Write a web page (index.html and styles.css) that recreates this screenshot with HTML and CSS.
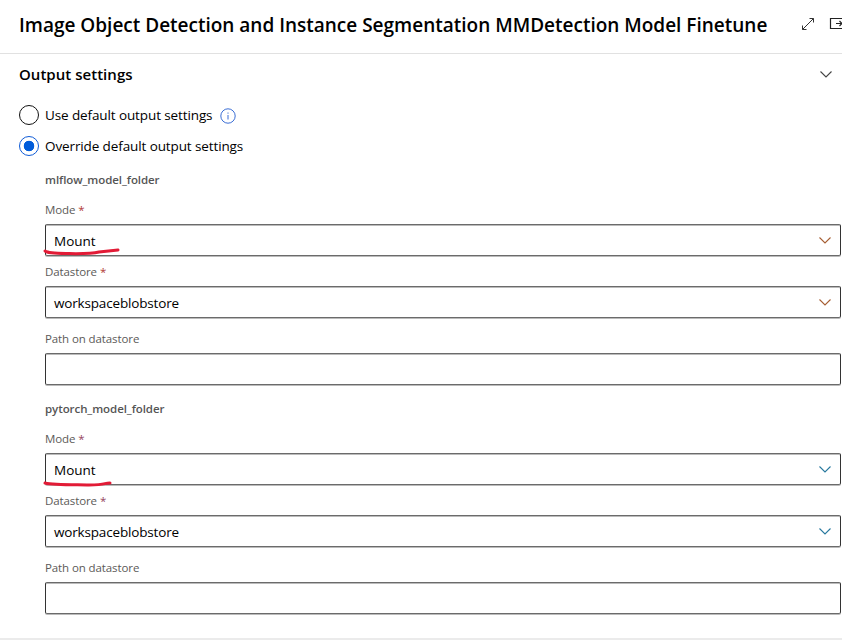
FILE: index.html
```html
<!DOCTYPE html>
<html lang="en">
<head>
<meta charset="utf-8">
<title>Output settings</title>
<link rel="stylesheet" href="styles.css">
</head>
<body>
<header class="header">
  <h1><span>Image Object Detection and Instance Segmentation MMDetection Model Finetune</span></h1>
  <svg class="expand" width="14" height="14" viewBox="0 0 14 14"><path d="M1.500 12.500 12.500 1.500M8.500 1.500h4v4M1.500 8.500v4h4"/></svg>
  <svg class="dock" width="16" height="12" viewBox="0 0 16 12"><path d="M.5 .5h15v10H.5zM6 5.500h6M9.500 3l2.500 2.500L9.500 8"/></svg>
</header>
<main>
  <div class="section-head">
    <h2><span>Output settings</span></h2>
    <svg class="chevron" width="12" height="7" viewBox="0 0 12 7"><path d="M.5 .5 6 6l5.500-5.500"/></svg>
  </div>
  <div class="option first">
    <i class="radio"></i><span>Use default output settings</span>
    <svg class="info" width="16" height="16" viewBox="0 0 16 16"><circle cx="8" cy="8" r="7.200"/><path d="M8 7v4.500M8 4.500v1.200"/></svg>
  </div>
  <div class="option">
    <i class="radio checked"></i><span>Override default output settings</span>
  </div>
  <section class="group">
    <h3>mlflow_model_folder</h3>
    <label class="mode">Mode <b>*</b></label>
    <div class="field"><span class="mount">Mount</span>
      <svg class="chevron warm" width="12" height="7" viewBox="0 0 12 7"><path d="M.5 .5 6 6l5.500-5.500"/></svg>
      <svg class="mark" width="80" height="10" viewBox="0 0 80 10"><path d="M2 4C5 6.500 14 6.400 26 6.600S48 7 56 5L75 3"/></svg>
    </div>
    <label class="store">Datastore <b>*</b></label>
    <div class="field"><span>workspaceblobstore</span>
      <svg class="chevron warm" width="12" height="7" viewBox="0 0 12 7"><path d="M.5 .5 6 6l5.500-5.500"/></svg>
    </div>
    <label class="path">Path on datastore</label>
    <div class="field"></div>
  </section>
  <section class="group second">
    <h3>pytorch_model_folder</h3>
    <label class="mode">Mode <b class="violet">*</b></label>
    <div class="field"><span class="mount">Mount</span>
      <svg class="chevron cool" width="12" height="7" viewBox="0 0 12 7"><path d="M.5 .5 6 6l5.500-5.500"/></svg>
      <svg class="mark low" width="80" height="10" viewBox="0 0 80 10"><path d="M2 4C10 6 24 5.700 44 5.900S60 4 67 4"/></svg>
    </div>
    <label class="store">Datastore <b class="violet">*</b></label>
    <div class="field"><span>workspaceblobstore</span>
      <svg class="chevron cool" width="12" height="7" viewBox="0 0 12 7"><path d="M.5 .5 6 6l5.500-5.500"/></svg>
    </div>
    <label class="path">Path on datastore</label>
    <div class="field"></div>
  </section>
</main>
</body>
</html>
```
FILE: styles.css
```css
* { box-sizing: border-box; }
body { margin: 0; width: 842px; height: 640px; overflow: hidden; background: #fff; color: #000; font: 13.5px/20px "Open Sans", "Noto Sans", sans-serif; }
h1, h2, h3 { margin: 0; font-weight: 600; white-space: nowrap; }
svg { fill: none; flex: none; overflow: visible; }
.header { height: 54px; display: flex; padding-left: 19px; border-bottom: 1px solid #e1e1e1; overflow: hidden; }
h1 { width: 782px; font-size: 19px; line-height: 50px; letter-spacing: -0.005px; flex: none; }
.expand { margin-top: 17px; stroke: #333; stroke-width: 1; }
.dock { margin: 18px 0 0 15px; stroke: #222; stroke-width: 1.2; }
main { height: 586px; border-bottom: 2px solid #ebebeb; }
.section-head { height: 40px; display: flex; align-items: center; justify-content: space-between; padding: 0 10px 0 19px; }
h2 { font-size: 15px; letter-spacing: 0.03px; }
.chevron { stroke: #444; stroke-width: 1.1; }
.option { height: 31px; display: flex; align-items: center; padding-left: 19px; letter-spacing: -0.11px; }
.first { margin-top: 5px; }
.option span { width: 168px; margin-left: 6px; white-space: nowrap; }
.radio { width: 20px; height: 20px; border: 1px solid #111; border-radius: 50%; flex: none; }
.checked { border-color: #0f5bd6; background: radial-gradient(circle, #015cda 5px, transparent 5.6px); }
.info { margin: 2px 0 0 7px; stroke: #3c6fd6; stroke-width: 1; }
.group { padding: 9px 1px 0 45px; }
h3 { height: 20px; font-size: 11.5px; letter-spacing: -0.07px; color: #555; }
label { display: block; color: #5c5a58; font-size: 11.5px; letter-spacing: -0.1px; white-space: nowrap; }
label b { font-weight: 400; color: #b23a35; }
label .violet { color: #96445e; }
.mode { padding-top: 10px; height: 34px; }
.store { height: 30px; padding-top: 6px; }
.path { height: 35px; padding-top: 11px; }
.field { height: 32px; border: 1px solid #333; border-top-color: #6b6b6b; border-bottom-color: #6b6b6b; border-radius: 2px; box-shadow: 0 1px #bbb, inset 0 1px #bbb; padding: 0 9px 0 8px; position: relative; display: flex; align-items: center; justify-content: space-between; letter-spacing: -0.17px; }
.field > span { padding-top: 1px; }
.field > .mount { letter-spacing: 0; }
.warm { stroke: #a65e32; }
.cool { stroke: #27789e; }
.mark { position: absolute; left: -3px; top: 22px; stroke: #e21b36; stroke-width: 3; stroke-linecap: round; }
.low { top: 25px; }
.second { padding-top: 14px; }
```
